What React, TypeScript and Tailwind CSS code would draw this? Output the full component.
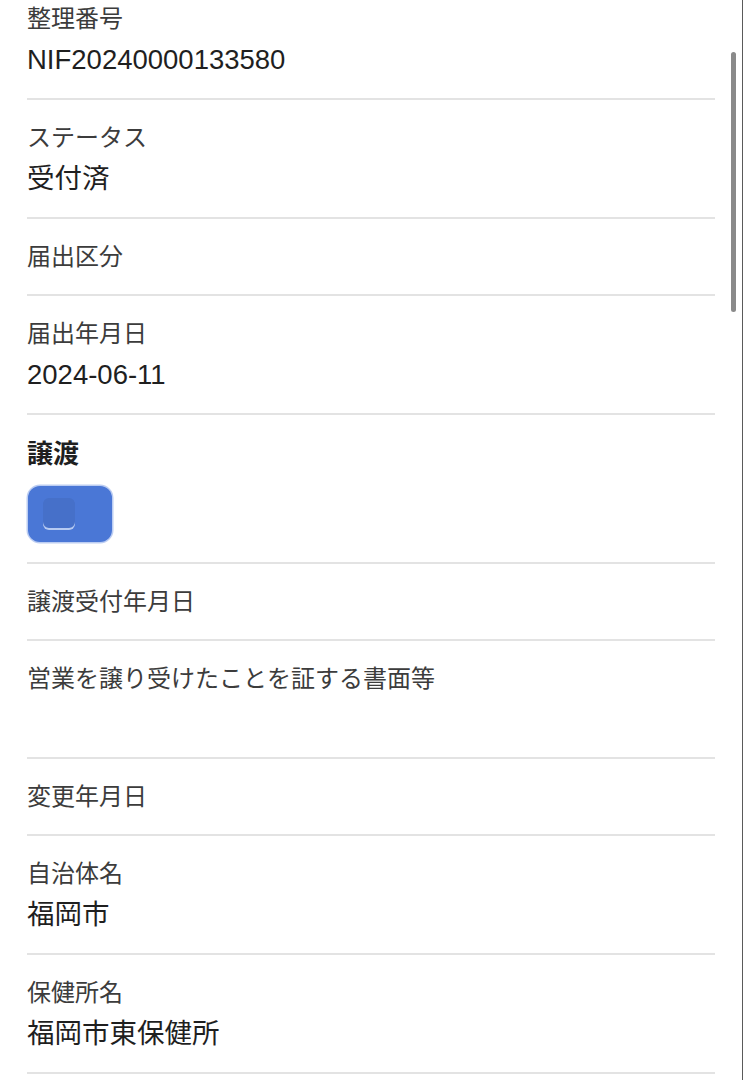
import React from 'react';

type Field = {
  label: string;
  value?: string;
  blank?: boolean;
};

const before: Field[] = [
  { label: 'ステータス', value: '受付済' },
  { label: '届出区分' },
  { label: '届出年月日', value: '2024-06-11' },
];

const after: Field[] = [
  { label: '譲渡受付年月日' },
  { label: '営業を譲り受けたことを証する書面等', blank: true },
  { label: '変更年月日' },
  { label: '自治体名', value: '福岡市' },
  { label: '保健所名', value: '福岡市東保健所' },
];

const FieldRow: React.FC<{ field: Field; first?: boolean }> = ({ field, first }) => (
  <div className={`border-b-2 border-[#e3e3e3] pb-[21px] ${first ? 'pt-[3px]' : 'pt-[22px]'}`}>
    <div className="text-[24px] leading-[32px] text-[#3c3c3c]">{field.label}</div>
    {field.value && (
      <div className="mt-[8px] text-[27.5px] leading-[34px] text-[#1f1f1f]">{field.value}</div>
    )}
    {field.blank && <div className="h-[41px]" />}
  </div>
);

const TransferToggle: React.FC = () => (
  <div className="w-[84px] h-[56px] rounded-[12px] bg-[#4a77d6] ring-[1.5px] ring-[#bccdf2] flex items-center pl-[15px]">
    <div className="w-[32px] h-[32px] rounded-[6px] bg-[#4670c9] shadow-[inset_0_-2px_0_rgba(220,232,255,0.75)]" />
  </div>
);

export default function App() {
  return (
    <div className="relative min-h-screen bg-white border-r border-[#5a5a5a] font-['Liberation_Sans','Noto_Sans_CJK_JP',sans-serif]">
      <div className="px-[27px]">
        <FieldRow field={{ label: '整理番号', value: 'NIF20240000133580' }} first />
        {before.map((f) => (
          <FieldRow key={f.label} field={f} />
        ))}

        <div className="border-b-2 border-[#e3e3e3] pt-[22px] pb-[20px]">
          <div className="text-[26px] leading-[34px] font-bold text-[#1f1f1f]">譲渡</div>
          <div className="mt-[15px] pl-[1px]">
            <TransferToggle />
          </div>
        </div>

        {after.map((f) => (
          <FieldRow key={f.label} field={f} />
        ))}
      </div>

      {/* scroll indicator */}
      <div className="absolute right-[6px] top-[52px] w-[5px] h-[260px] rounded-full bg-[#8a8a8a]" />
    </div>
  );
}
